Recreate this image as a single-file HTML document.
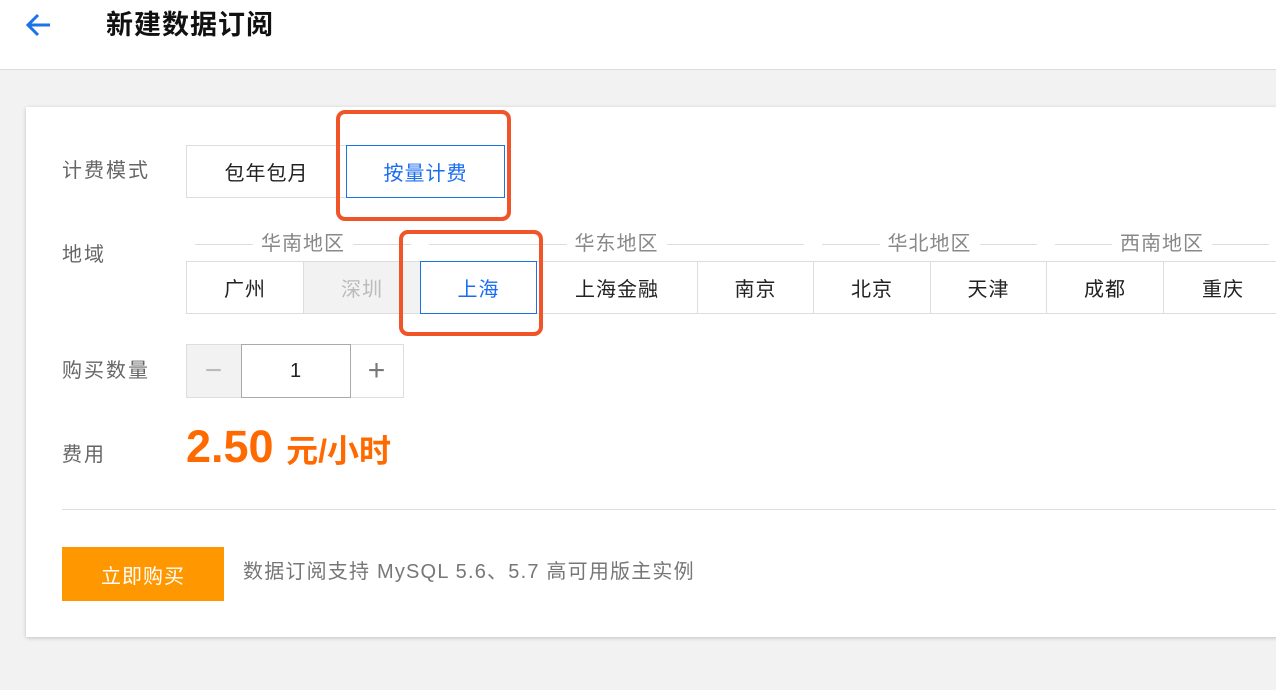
<!DOCTYPE html>
<html><head><meta charset="utf-8"><style>
*{margin:0;padding:0;box-sizing:border-box}
body{width:1276px;height:690px;background:#f2f2f2;font-family:"Liberation Sans","Noto Sans CJK SC",sans-serif;position:relative;overflow:hidden;letter-spacing:1px}
.hdr{position:absolute;left:0;top:0;width:1276px;height:70px;background:#fff;border-bottom:1px solid #ddd}
.title{position:absolute;left:106px;top:6px;font-size:27px;font-weight:bold;color:#111;line-height:38px}
.card{position:absolute;left:26px;top:107px;width:1260px;height:530px;background:#fff;box-shadow:0 1px 4px rgba(0,0,0,.2)}
.a{position:absolute}
.lbl{position:absolute;left:62px;font-size:20px;color:#666;line-height:28px;letter-spacing:2px}
.box{position:absolute;border:1px solid #ddd;display:flex;align-items:center;justify-content:center;font-size:20px;color:#222;background:#fff}
.sel{border:1px solid #1a73e8;color:#1a6cf0;z-index:2}
.dis{background:#f2f2f2;color:#bbb}
.grp{position:absolute;top:231px;height:26px;font-size:20px;color:#888;text-align:center;line-height:26px}
.grp span{background:#fff;padding:0 8px;position:relative}
.grp:before{content:"";position:absolute;left:9px;right:9px;top:13px;border-top:1px solid #ddd}
.red{position:absolute;border:4px solid #ef5529;border-radius:9px;z-index:5}
</style></head><body>
<div class="hdr">
<svg class="a" style="left:24px;top:12px" width="30" height="26" viewBox="0 0 30 26"><path d="M26 13H5M14 3L4 13l10 10" fill="none" stroke="#1a73e8" stroke-width="3"/></svg>
<div class="title">新建数据订阅</div>
</div>
<div class="card"></div>
<div class="lbl" style="top:157px">计费模式</div>
<div class="box" style="left:186px;top:145px;width:161px;height:53px">包年包月</div>
<div class="box sel" style="left:346px;top:145px;width:159px;height:53px">按量计费</div>
<div class="lbl" style="top:241px">地域</div>
<div class="grp" style="left:186px;width:234px"><span>华南地区</span></div>
<div class="grp" style="left:420px;width:393px"><span>华东地区</span></div>
<div class="grp" style="left:813px;width:233px"><span>华北地区</span></div>
<div class="grp" style="left:1046px;width:232px"><span>西南地区</span></div>
<div class="box" style="left:186px;top:261px;width:118px;height:53px">广州</div>
<div class="box dis" style="left:303px;top:261px;width:118px;height:53px">深圳</div>
<div class="box sel" style="left:420px;top:261px;width:117px;height:53px">上海</div>
<div class="box" style="left:536px;top:261px;width:162px;height:53px">上海金融</div>
<div class="box" style="left:697px;top:261px;width:117px;height:53px">南京</div>
<div class="box" style="left:813px;top:261px;width:118px;height:53px">北京</div>
<div class="box" style="left:930px;top:261px;width:117px;height:53px">天津</div>
<div class="box" style="left:1046px;top:261px;width:118px;height:53px">成都</div>
<div class="box" style="left:1163px;top:261px;width:120px;height:53px">重庆</div>
<div class="lbl" style="top:357px">购买数量</div>
<div class="box dis" style="left:186px;top:344px;width:56px;height:54px;font-size:30px;color:#bbb">−</div>
<div class="box" style="left:241px;top:344px;width:110px;height:54px;border-color:#aaa;z-index:2">1</div>
<div class="box" style="left:350px;top:344px;width:54px;height:54px;font-size:30px;color:#777">+</div>
<div class="lbl" style="top:441px">费用</div>
<div class="a" style="left:186px;top:422px;color:#ff6a00;font-weight:bold;font-size:45px;line-height:50px;letter-spacing:0">2.50 <span style="font-size:32px;letter-spacing:0">元/小时</span></div>
<div class="a" style="left:62px;top:509px;width:1214px;border-top:1px solid #ddd"></div>
<div class="a" style="left:62px;top:547px;width:162px;height:54px;background:#ff9800;color:#fff;font-size:20px;display:flex;align-items:center;justify-content:center">立即购买</div>
<div class="a" style="left:243px;top:558px;font-size:20px;color:#777;line-height:28px;letter-spacing:1.2px">数据订阅支持 MySQL 5.6、5.7 高可用版主实例</div>
<div class="red" style="left:336px;top:110px;width:175px;height:111px"></div>
<div class="red" style="left:399px;top:230px;width:144px;height:106px"></div>
</body></html>
